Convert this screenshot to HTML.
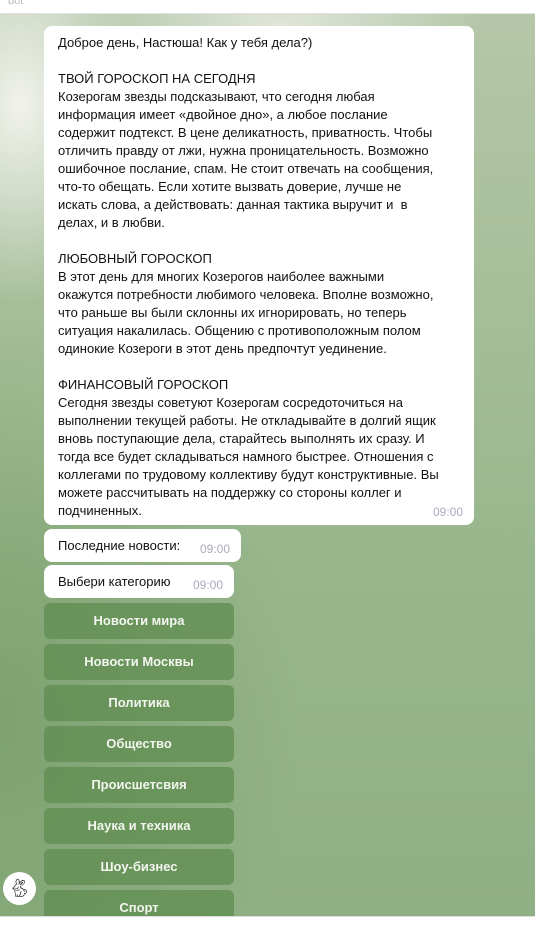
<!DOCTYPE html>
<html><head><meta charset="utf-8"><style>
*{margin:0;padding:0;box-sizing:border-box}
body{width:535px;height:935px;overflow:hidden;position:relative;font-family:"Liberation Sans","DejaVu Sans",sans-serif;background:#fff}
.top{position:absolute;left:0;top:0;width:535px;height:14px;background:#fff;border-bottom:1px solid #e2e2e2;color:#bbb;font-size:11px;padding-left:8px;line-height:2px;overflow:hidden}
.bg{position:absolute;left:0;top:14px;width:535px;height:902px;overflow:hidden;
background:
radial-gradient(ellipse 120px 200px at 20px 90px,rgba(245,245,240,.95),rgba(230,235,225,.6) 50%,rgba(200,215,190,0) 100%),
radial-gradient(ellipse 200px 80px at 280px 10px,rgba(235,238,230,.8),rgba(220,230,210,0) 100%),
radial-gradient(ellipse 300px 400px at 0px 700px,rgba(110,150,95,.6),rgba(110,150,95,0)),
linear-gradient(180deg,#b5c7a8 0%,#a6bf99 30%,#98b68c 60%,#8fb084 100%)}
.bubble{position:absolute;background:#fff;border-radius:8px;font-size:13px;line-height:18px;color:#111}
.main{left:44px;top:26px;width:430px;height:499px;padding:8px 14px}
.t{position:absolute;right:11px;bottom:4px;font-size:12px;color:#aab}
.s{height:33px;padding:8px 14px}
.btn{position:absolute;left:44px;width:190px;height:36px;border-radius:6px;background:rgba(95,140,80,.75);color:#f2f6ee;font-size:13px;font-weight:bold;text-align:center;line-height:36px}
.av{position:absolute;left:3px;top:872px;width:33px;height:33px;border-radius:50%;background:#fff;font-size:18px;text-align:center;line-height:33px;color:#222}
.bot{position:absolute;left:0;top:916px;width:535px;height:19px;background:#fff;border-top:1px solid #ddd}
</style></head><body>
<div class="top">bot</div>
<div class="bg"></div>
<div class="bubble main">Доброе день, Настюша! Как у тебя дела?)<br><br>ТВОЙ ГОРОСКОП НА СЕГОДНЯ<br>Козерогам звезды подсказывают, что сегодня любая<br>информация имеет «двойное дно», а любое послание<br>содержит подтекст. В цене деликатность, приватность. Чтобы<br>отличить правду от лжи, нужна проницательность. Возможно<br>ошибочное послание, спам. Не стоит отвечать на сообщения,<br>что-то обещать. Если хотите вызвать доверие, лучше не<br>искать слова, а действовать: данная тактика выручит и&nbsp; в<br>делах, и в любви.<br><br>ЛЮБОВНЫЙ ГОРОСКОП<br>В этот день для многих Козерогов наиболее важными<br>окажутся потребности любимого человека. Вполне возможно,<br>что раньше вы были склонны их игнорировать, но теперь<br>ситуация накалилась. Общению с противоположным полом<br>одинокие Козероги в этот день предпочтут уединение.<br><br>ФИНАНСОВЫЙ ГОРОСКОП<br>Сегодня звезды советуют Козерогам сосредоточиться на<br>выполнении текущей работы. Не откладывайте в долгий ящик<br>вновь поступающие дела, старайтесь выполнять их сразу. И<br>тогда все будет складываться намного быстрее. Отношения с<br>коллегами по трудовому коллективу будут конструктивные. Вы<br>можете рассчитывать на поддержку со стороны коллег и<br>подчиненных.<span class="t">09:00</span></div>
<div class="bubble s" style="left:44px;top:529px;width:197px">Последние новости:<span class="t">09:00</span></div>
<div class="bubble s" style="left:44px;top:565px;width:190px">Выбери категорию<span class="t">09:00</span></div>
<div class="btn" style="top:603px">Новости мира</div>
<div class="btn" style="top:644px">Новости Москвы</div>
<div class="btn" style="top:685px">Политика</div>
<div class="btn" style="top:726px">Общество</div>
<div class="btn" style="top:767px">Происшетсвия</div>
<div class="btn" style="top:808px">Наука и техника</div>
<div class="btn" style="top:849px">Шоу-бизнес</div>
<div class="btn" style="top:890px">Спорт</div>
<div class="av">&#x1F407;&#xFE0E;</div>
<div class="bot"></div>
</body></html>
